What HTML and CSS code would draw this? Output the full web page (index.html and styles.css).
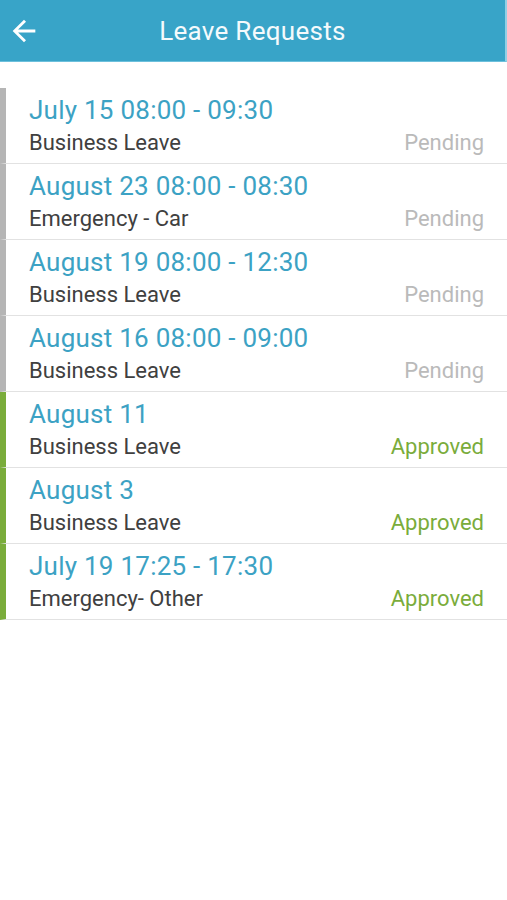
FILE: index.html
```html
<!DOCTYPE html>
<html lang="en">
<head>
<meta charset="UTF-8">
<meta name="viewport" content="width=device-width, initial-scale=1.0">
<title>Leave Requests</title>
<link rel="stylesheet" href="styles.css">
</head>
<body>

<div class="app-bar">
  <svg class="back-icon" width="34" height="34" viewBox="0 0 24 24">
    <path d="M20 11H7.83l5.59-5.59L12 4l-8 8 8 8 1.41-1.41L7.83 13H20v-2z" fill="#fff"/>
  </svg>
  <div class="app-title">Leave Requests</div>
</div>

<div class="request-list">
  <div class="request pending">
    <div class="request-date">July 15 08:00 - 09:30</div>
    <div class="request-row">
      <span class="request-type">Business Leave</span>
      <span class="request-status">Pending</span>
    </div>
  </div>
  <div class="request pending">
    <div class="request-date">August 23 08:00 - 08:30</div>
    <div class="request-row">
      <span class="request-type">Emergency - Car</span>
      <span class="request-status">Pending</span>
    </div>
  </div>
  <div class="request pending">
    <div class="request-date">August 19 08:00 - 12:30</div>
    <div class="request-row">
      <span class="request-type">Business Leave</span>
      <span class="request-status">Pending</span>
    </div>
  </div>
  <div class="request pending">
    <div class="request-date">August 16 08:00 - 09:00</div>
    <div class="request-row">
      <span class="request-type">Business Leave</span>
      <span class="request-status">Pending</span>
    </div>
  </div>
  <div class="request approved">
    <div class="request-date">August 11</div>
    <div class="request-row">
      <span class="request-type">Business Leave</span>
      <span class="request-status">Approved</span>
    </div>
  </div>
  <div class="request approved">
    <div class="request-date">August 3</div>
    <div class="request-row">
      <span class="request-type">Business Leave</span>
      <span class="request-status">Approved</span>
    </div>
  </div>
  <div class="request approved">
    <div class="request-date">July 19 17:25 - 17:30</div>
    <div class="request-row">
      <span class="request-type">Emergency- Other</span>
      <span class="request-status">Approved</span>
    </div>
  </div>
</div>

</body>
</html>
```

FILE: styles.css
```css
body {
  font-family: Roboto, "Noto Sans", sans-serif;
  background-color: #fff;
  margin: 0;
  padding: 0;
}
.app-bar {
  height: 61px;
  background-color: #38a4c8;
  border-bottom: 1px solid #6cc0dc;
  border-right: 2px solid #8fd0e6;
  display: flex;
  align-items: center;
  position: relative;
}
.back-icon {
  margin-left: 7px;
}
.app-title {
  position: absolute;
  left: 0;
  right: 0;
  text-align: center;
  color: #f4fafc;
  font-size: 26px;
  letter-spacing: 0.3px;
  pointer-events: none;
}
.request-list {
  margin-top: 26px;
}
.request {
  border-left: 6px solid #b5b5b5;
  border-bottom: 1px solid #e2e2e2;
  height: 76px;
  padding: 6px 23px 0 23px;
  box-sizing: border-box;
}
.request.approved {
  border-left-color: #7aac3b;
}
.request-date {
  color: #3ca2c4;
  font-size: 26px;
  letter-spacing: 0.25px;
  line-height: 33px;
}
.request-row {
  display: flex;
  justify-content: space-between;
  font-size: 22px;
  line-height: 32px;
}
.request-type {
  color: #404040;
}
.request-status {
  color: #bababa;
}
.approved .request-status {
  color: #7aac3b;
}
```
